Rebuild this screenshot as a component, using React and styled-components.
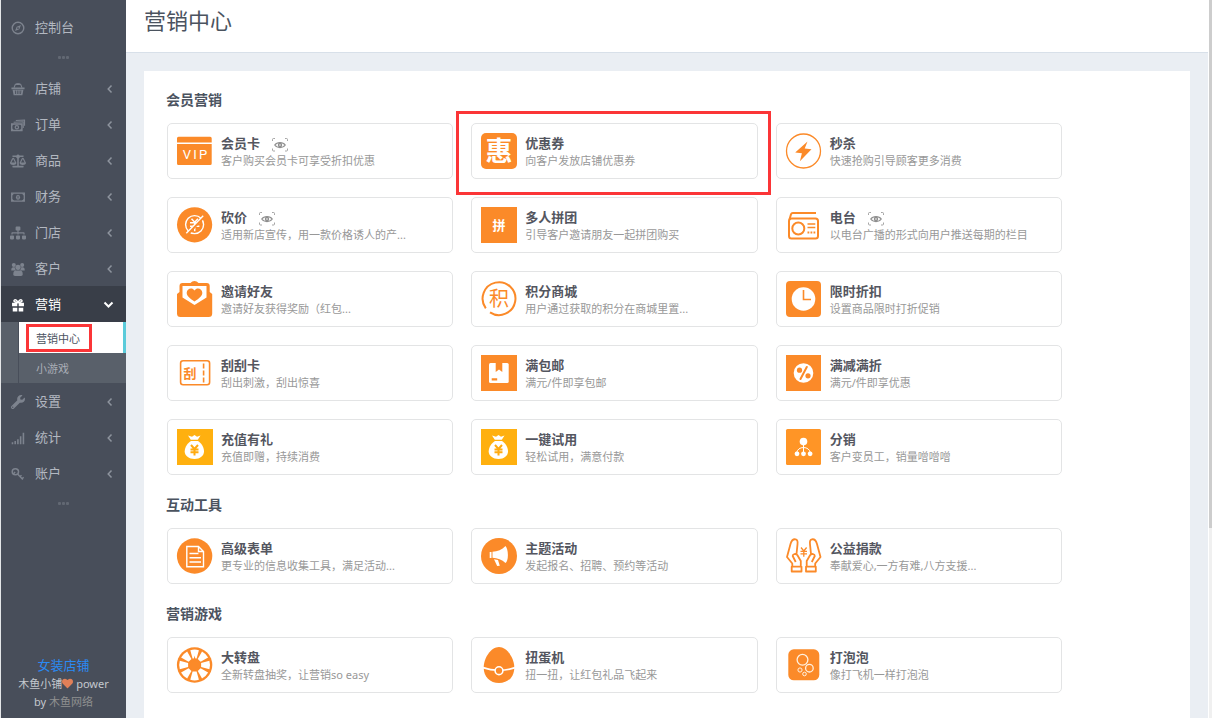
import { useState } from 'react';
import styled, { createGlobalStyle, css } from 'styled-components';
import { FaSitemap, FaWrench, FaBalanceScale, FaHeart } from 'react-icons/fa';

const GlobalStyle = createGlobalStyle`
  :root {
    --orange: #fb8a29;
    --sidebar: #484e5a;
    --mark: #fb3537;
  }

  * {
    box-sizing: border-box;
  }

  body {
    margin: 0;
    background-color: #eaeef3;
    font-family: "Noto Sans", "Noto Sans CJK SC", sans-serif;
    font-size: 13px;
    color: #4b535f;
  }

  a {
    color: inherit;
    text-decoration: none;
  }
`;

const Shell = styled.div`
  display: flex;
  height: 100vh;
  border-left: 1px solid #e4e6e8;
  overflow: hidden;
`;

const Sidebar = styled.aside`
  flex: 0 0 125px;
  display: flex;
  flex-direction: column;
  padding: 9px 0 7px;
  background-color: var(--sidebar);
  color: #b3b8c1;
`;

const Dots = styled.div`
  display: flex;
  align-items: center;
  justify-content: center;
  gap: 1px;
  height: 25px;

  i {
    width: 3px;
    height: 3px;
    border-radius: 1px;
    background-color: #626873;
  }
`;

const NavButton = styled.button`
  display: flex;
  align-items: center;
  width: 100%;
  height: 36px;
  padding: 2px 12px 0 9px;
  border: none;
  background-color: ${({ $open }) => ($open ? '#393e48' : 'transparent')};
  color: ${({ $open }) => ($open ? '#fff' : 'inherit')};
  font: inherit;
  text-align: left;
  cursor: pointer;

  > svg:first-child {
    flex: none;
    width: 16px;
    height: 14px;
    margin-right: 9px;
    color: ${({ $open }) => ($open ? '#fff' : '#7d838e')};
  }

  span {
    flex: 1;
    padding-bottom: 4px;
  }
`;

const SubMenu = styled.div`
  padding-left: 17px;
  background-color: #59606a;
`;

const SubItem = styled.a`
  display: flex;
  align-items: center;
  height: 30px;
  padding-left: 7px;
  border-left: 1px solid var(--sidebar);
  font-size: 11px;
  color: #a9aeb7;

  ${({ $current }) => $current && css`
    height: 31px;
    background-color: #fff;
    border-right: 3px solid #5bcbda;
    color: #4b535f;
  `}
`;

const SubLabel = styled.span`
  padding: 3px 9px 3px 7px;
  border: 3px solid ${({ $marked }) => ($marked ? 'var(--mark)' : 'transparent')};
`;

const SidebarFoot = styled.div`
  margin-top: auto;
  text-align: center;
  font-size: 11px;
  line-height: 18px;
  color: #c4c8ce;

  svg {
    width: 11px;
    height: 11px;
    color: #e07f58;
    vertical-align: -1px;
  }
`;

const StoreLink = styled.a`
  display: block;
  font-size: 13px;
  line-height: 20px;
  color: #2a8af4;
`;

const BrandLink = styled.a`
  color: #8f9090;
`;

const Main = styled.main`
  flex: 1;
  min-width: 0;
  overflow-y: auto;
  scrollbar-width: none;
`;

const Header = styled.header`
  padding: 0 18px 12px;
  background-color: #fff;
  border-bottom: 1px solid #d8e0e9;
`;

const PageTitle = styled.h1`
  margin: 0;
  font-size: 22px;
  font-weight: 400;
  line-height: 40px;
`;

const Panel = styled.div`
  display: flex;
  flex-direction: column;
  gap: 20px;
  margin: 18px;
  padding: 19px 22px 60px;
  background-color: #fff;
`;

const SectionTitle = styled.h2`
  margin: 0 0 13px;
  font-size: 14px;
  line-height: 20px;
`;

const CardGrid = styled.div`
  display: grid;
  grid-template-columns: repeat(3, minmax(0, 1fr));
  gap: 18px;
  max-width: 896px;
  padding-left: 1px;
`;

const Card = styled.a`
  position: relative;
  display: flex;
  align-items: center;
  gap: 8px;
  padding: 9px;
  border: 1px solid #e3e4e5;
  border-radius: 5px;

  ${({ $marked }) => $marked && css`
    &::after {
      content: '';
      position: absolute;
      inset: -13px -14px -17px -16px;
      border: 3px solid var(--mark);
    }
  `}

  > svg {
    flex: none;
    width: 36px;
    height: 36px;
    overflow: visible;
    color: var(--orange);
  }
`;

const CardText = styled.div`
  min-width: 0;
  padding-top: 2px;
`;

const CardName = styled.h3`
  display: flex;
  align-items: center;
  gap: 12px;
  margin: 0;
  font-size: 13px;
  line-height: 17px;
  color: #54565f;
`;

const CardDesc = styled.p`
  margin: 0;
  font-size: 11px;
  line-height: 17px;
  color: #989898;
  white-space: nowrap;
`;

const ScrollTrack = styled.div`
  flex: 0 0 4px;
  border-left: 1px solid #fff;
  background-color: #f0f0f0;
`;

const ScrollThumb = styled.div`
  height: 73.5%;
  background-color: #cdcdcd;
`;

/* sidebar icons */

const Glyph = ({ children }) => (
  <svg viewBox="0 0 16 16" fill="none" stroke="currentColor" aria-hidden="true">{children}</svg>
);

const CompassIcon = () => (
  <Glyph>
    <circle cx="8" cy="8" r="6.6" strokeWidth="1.6" />
    <path d="M11.4 4.6 9.5 9.4l-4.900 2 1.900-4.900z" fill="currentColor" stroke="none" />
    <circle cx="8" cy="8" r="1" fill="#484e5a" stroke="none" />
  </Glyph>
);

const BasketIcon = () => (
  <Glyph>
    <path d="M3.4 6.500 5 2.500h6l1.600 4" strokeWidth="1.2" />
    <path d="M6 1.500h4v1.800H6zM.5 6.200h15v2H.5z" fill="currentColor" stroke="none" />
    <path d="M1.800 8.900h12.400L13 15H3zM4.400 9.800l.4 4h.9l-.3-4zM6.700 9.800v4h.9v-4zM8.700 9.800v4h.9v-4zM10.800 9.800l-.3 4h.9l.4-4z" fill="currentColor" fillRule="evenodd" stroke="none" />
  </Glyph>
);

const CashIcon = () => (
  <Glyph>
    <path d="M.8 6.800h11.700v7.400H.8z" strokeWidth="1.600" />
    <path d="M1 7h2.400L1 9.200zM12.300 7H9.900l2.400 2.200zM1 14h2.400L1 11.800zM12.300 14H9.900l2.400-2.200z" fill="currentColor" stroke="none" />
    <circle cx="6.700" cy="10.500" r="1.900" strokeWidth="1.400" />
    <path d="M3 4.900 14 4.300v7M5.500 2.900l10-.6v6.500" strokeWidth="1.200" />
  </Glyph>
);

const BillIcon = () => (
  <Glyph>
    <path d="M.8 3.500h14.400v9.300H.8z" strokeWidth="1.500" />
    <path d="M1 4h2.800L1 6.600zM15 4h-2.800L15 6.600zM1 12.500h2.800L1 9.900zM15 12.500h-2.800L15 9.900z" fill="currentColor" stroke="none" />
    <ellipse cx="8" cy="8.200" rx="2.300" ry="2.900" fill="currentColor" stroke="none" />
    <path d="M8 6.700v3" stroke="#484e5a" />
  </Glyph>
);

const CrowdIcon = () => (
  <Glyph>
    <g fill="currentColor" stroke="none">
      <circle cx="3.200" cy="3.300" r="2.300" />
      <circle cx="12.800" cy="3.300" r="2.300" />
      <circle cx="8" cy="6" r="3" />
      <path d="M.3 9.200C.3 7 1.200 6 2.600 6h1.700c.2 1.600.6 2.700 1.700 3.600H.3zM15.700 9.200C15.700 7 14.800 6 13.400 6h-1.700c-.2 1.600-.6 2.700-1.700 3.600h5.700z" />
      <path d="M2.600 14c0-2.800.9-4.200 2.900-4.200h5c2 0 2.900 1.400 2.900 4.200 0 1.200-.8 2-2 2H4.600c-1.200 0-2-.8-2-2z" />
    </g>
  </Glyph>
);

const GiftIcon = () => (
  <Glyph>
    <path d="M1.200 5.500h6v4h-6zM8.800 5.500h6v4h-6zM2 11.200h5.200v4.300H2zM8.800 11.200H14v4.300H8.800z" fill="currentColor" stroke="none" />
    <path d="M8 5.400C7 2.600 5 1.400 3.700 2.500 2.700 3.500 4 5 8 5.400zM8 5.400c1-2.800 3-4 4.300-2.900 1 1-.3 2.500-4.300 2.900z" strokeWidth="1.600" />
  </Glyph>
);

const SignalIcon = () => (
  <Glyph>
    <path d="M1.700 12.800v2.200M4.800 11.500V15M7.900 9.300V15M11 6v9M14.200 2v13" strokeWidth="1.800" />
  </Glyph>
);

const KeyIcon = () => (
  <Glyph>
    <ellipse cx="5" cy="5.500" rx="3.600" ry="3.400" strokeWidth="1.700" />
    <path d="m7.500 8 6 6.300M9.800 11.500l2.200-2.200M12.200 14l2.200-2.200M2.500 8.500l2.200-3" strokeWidth="1.600" />
  </Glyph>
);

const Caret = ({ open }) => (
  <svg width="12" height="12" viewBox="0 0 12 12" fill="none" stroke="currentColor" aria-hidden="true">
    {open
      ? <path d="m2.500 3.500 4 4 4-4" strokeWidth="2" />
      : <path d="M9.500 2.500 6.200 6l3.300 3.500" stroke="#8d939d" strokeWidth="1.500" />}
  </svg>
);

/* card icons, all on a 36 unit square */

const Art = ({ children }) => <svg viewBox="0 0 36 36" fill="currentColor" aria-hidden="true">{children}</svg>;

const iconFont = '"Noto Sans CJK SC", sans-serif';

const VipIcon = () => (
  <Art>
    <path d="M1.500 3.700h31.700a1.500 1.500 0 0 1 1.500 1.500v4.300H0V5.200a1.500 1.500 0 0 1 1.500-1.500zM0 11h34.700v19.500a1.500 1.500 0 0 1-1.500 1.500H1.500A1.500 1.500 0 0 1 0 30.500z" />
    <g fill="#fff" fontFamily="Roboto, sans-serif" fontSize="13" textAnchor="middle">
      <text x="10" y="26">V</text>
      <text x="18" y="26">I</text>
      <text x="26" y="26">P</text>
    </g>
  </Art>
);

const CouponIcon = () => (
  <Art>
    <rect width="36" height="36" rx="5" />
    <text x="18" y="28" fill="#fff" fontFamily={iconFont} fontWeight="700" fontSize="27" textAnchor="middle">惠</text>
  </Art>
);

const FlashIcon = () => (
  <Art>
    <circle cx="17.5" cy="18" r="17" fill="none" stroke="currentColor" strokeWidth="1.3" />
    <path d="M21.500 8.500 9.200 19.500l6.700.8-2 8L25.500 16.300l-6.800-.9z" />
  </Art>
);

const BargainIcon = () => (
  <Art>
    <circle cx="17.600" cy="17.800" r="17.600" />
    <g fill="none" stroke="#fff" strokeWidth="1.400">
      <circle cx="17.600" cy="17.600" r="9" />
      <path d="m14.500 11.800 3.200 3.400 3.200-3.400M13 15.800h9.400M13 19.300h9.400M17.700 15.200v9" strokeWidth="1.500" />
      <path d="M27 9.500 10.500 27" stroke="#fb8a29" strokeWidth="3" />
      <path d="M26.200 8.700 9.300 26.300" />
    </g>
  </Art>
);

const GroupBuyIcon = () => (
  <Art>
    <rect width="36" height="36" />
    <text x="18" y="23" fill="#fff" fontFamily={iconFont} fontWeight="700" fontSize="13" textAnchor="middle">拼</text>
  </Art>
);

const RadioIcon = () => (
  <Art>
    <g fill="none" stroke="currentColor" strokeWidth="2">
      <rect x="3" y="11.500" width="29" height="20" rx="2.500" />
      <path d="M3.500 12.500 5 7.300Q5.400 6 6.800 6H30" />
      <circle cx="12.300" cy="21.500" r="6" />
      <path d="M21.500 17h7.800M21.500 20.500h7.800" strokeWidth="1.700" />
      <path d="M21.500 25.500h7.800" strokeDasharray="1.800 1.200" />
    </g>
  </Art>
);

const InviteIcon = () => (
  <Art>
    <path d="M13.500 2C14.500.7 16 0 17.500 0s3 .7 4 2h8.200a3 3 0 0 1 3 3v6l2.500 2v19.500a3.500 3.500 0 0 1-3.500 3.500H3.500A3.500 3.500 0 0 1 0 32.500V13l2.500-2V5a3 3 0 0 1 3-3z" />
    <path d="M5.500 5h24v11.500l-12 7.500-12-7.500z" fill="#fff" />
    <path d="M17.500 20.500c-5-3.300-7.800-5.500-7.800-8.700 0-4.400 5.600-6 7.800-2.300 2.200-3.700 7.800-2.100 7.800 2.300 0 3.200-2.800 5.400-7.800 8.700z" />
  </Art>
);

const PointsIcon = () => (
  <Art>
    <path d="M4.800 27.300A16.400 16.400 0 1 1 9 31.300" fill="none" stroke="currentColor" strokeWidth="2" />
    <text x="18" y="25" fontFamily={iconFont} fontSize="20" textAnchor="middle">积</text>
  </Art>
);

const ClockIcon = () => (
  <Art>
    <rect width="35" height="36" rx="4" />
    <circle cx="17.500" cy="18" r="11.800" fill="#fff" />
    <path d="M17.500 9v9.500H25" fill="none" stroke="currentColor" strokeWidth="1.600" />
  </Art>
);

const ScratchIcon = () => (
  <Art>
    <rect x="3.600" y="5.800" width="29" height="24" rx="2.500" fill="none" stroke="currentColor" strokeWidth="1.600" />
    <path d="M26.600 8.500v19" fill="none" stroke="currentColor" strokeWidth="1.600" strokeDasharray="5 2" />
    <text x="13" y="22.500" fontFamily={iconFont} fontWeight="700" fontSize="13" textAnchor="middle">刮</text>
  </Art>
);

const ParcelIcon = () => (
  <Art>
    <rect width="36" height="36" />
    <rect x="8" y="8" width="19.700" height="20" rx="1.500" fill="#fff" />
    <path d="M14.700 8h6.600v9L18 14.500 14.700 17zM10.700 23.300h5.500v2.200h-5.500z" />
  </Art>
);

const PercentIcon = () => (
  <Art>
    <rect width="35" height="36" />
    <circle cx="17.500" cy="18" r="9.800" fill="#fff" />
    <circle cx="13.500" cy="15.200" r="2.600" />
    <circle cx="22" cy="20.800" r="2.600" />
    <path d="m20.800 12-6.300 12" stroke="currentColor" strokeWidth="2" strokeLinecap="round" />
  </Art>
);

const MoneyBagIcon = () => (
  <Art>
    <rect width="36" height="36" fill="#ffb00f" />
    <path d="m11 6.500 4 1.200 2.500-1.700L20 7.700l3.500-1.200-2.700 4.200h-7z" fill="#fff" />
    <path d="M14 12h7c2.800 1.700 6 5.800 6 10.300 0 4.700-4 7.700-9.500 7.700S7.700 27 7.700 22.300C7.700 17.800 11.200 13.700 14 12z" fill="#fff" />
    <path d="m14 16 3.500 4L21 16M13.500 20.500h8M13.500 23.300h8M17.500 20v6.500" fill="none" stroke="#ffab10" strokeWidth="2" />
  </Art>
);

const ResellIcon = () => (
  <Art>
    <rect width="35" height="36" rx="1.500" fill="#ff9526" />
    <g fill="#fff">
      <circle cx="17.500" cy="12.600" r="3.800" />
      <circle cx="11" cy="24.800" r="2.400" />
      <circle cx="17.500" cy="24.800" r="2.400" />
      <circle cx="24.100" cy="24.800" r="2.400" />
      <path d="M17.500 15v8M10.700 23.500c.6-3 3.300-5 6.800-5s6.200 2 6.800 5" fill="none" stroke="#fff" strokeWidth="1" />
    </g>
  </Art>
);

const FormIcon = () => (
  <Art>
    <circle cx="17.600" cy="18" r="17.700" />
    <path d="M9.800 8.500h11.700l5 5v15.200H9.800zM21.500 8.500v5h5M12.500 15.500h9M12.500 19.700h11.500M12.500 24h11.500" fill="none" stroke="#fff" strokeWidth="1.400" />
  </Art>
);

const MegaphoneIcon = () => (
  <Art>
    <circle cx="18" cy="18" r="18" />
    <path d="M8.700 14h1.800v6H8.700zM11.500 13.700c5-.2 9.500-2 13-5.700 1.400 1.500 2.400 4.800 2.400 9s-1 7-2.400 8c-3.500-3.400-8-5-13-5.200z" fill="#fff" />
    <path d="m13 21.200 4 .8 1.800 5.700-2.600.4z" fill="#fff" />
  </Art>
);

const hand = 'M6.300 28.500v-3L1 19 4.500 6C5.500 2.500 7.500 1 9.500 1.300c2.200.3 2.300 2.700 2 5L10.500 16M14.800 28.500V23l-3.500-6c-1.500-1.700-4.600-1-4.600 1l3 6M5.700 28.700h9.800v4.800H5.700z';

const DonateIcon = () => (
  <Art>
    <g fill="none" stroke="currentColor" strokeWidth="1.800" strokeLinejoin="round">
      <path d={hand} />
      <path d={hand} transform="matrix(-1 0 0 1 35.500 0)" />
      <path d="m15 9.500 2.800 3.500 2.800-3.500M14.500 13.300H21M14.500 15.800H21M17.800 13v5.800" strokeWidth="1.300" />
    </g>
  </Art>
);

const WheelIcon = () => (
  <Art>
    <circle cx="17.600" cy="18" r="17.700" />
    {[0, 45, 90, 135, 180, 225, 270, 315].map((angle) => (
      <path key={angle} d="m15.600 11.500-2.300-8.300a15.500 15.500 0 0 1 8.600 0l-2.300 8.300z" fill="#fff" transform={`rotate(${angle} 17.600 18)`} />
    ))}
    <circle cx="17.600" cy="18" r="5.300" />
    <path d="m17.600 8.500 1.400 6h-2.800z" />
  </Art>
);

const EggIcon = () => (
  <Art>
    <path d="M18 0c8 0 15.300 11 15.300 20.500C33.300 30 27 36 18 36S2.700 30 2.700 20.500C2.700 11 10 0 18 0z" />
    <path d="M2 20.700c5 1.800 10.500 2.600 16 2.600s11-.8 16-2.600" fill="none" stroke="#fff" strokeWidth="1.800" />
    <circle cx="18" cy="23.700" r="3.900" stroke="#fff" strokeWidth="1.600" />
  </Art>
);

const BubbleIcon = () => (
  <Art>
    <rect x="2.300" y="2.300" width="31" height="31" rx="5.500" />
    <g fill="none" stroke="#fff0df" strokeWidth="1.300">
      <circle cx="16.500" cy="12.800" r="5.400" />
      <circle cx="23.400" cy="21.200" r="3.800" />
      <circle cx="14" cy="23" r="2.100" strokeWidth="1" />
      <circle cx="18.500" cy="27" r="1.800" strokeWidth="1" />
    </g>
  </Art>
);

const PreviewIcon = () => (
  <svg width="16" height="16" viewBox="0 0 16 16" fill="none" stroke="#8f8f8f" aria-hidden="true">
    <path d="M.5 5V3.500q0-1 1-1H3M13 2.500h1.500q1 0 1 1V5M15.500 12.500V14q0 1-1 1H13M3 15H1.500q-1 0-1-1v-1.500" strokeWidth="0.800" />
    <path d="M2.800 9C5 5.700 11 5.700 13.200 9 11 12.300 5 12.300 2.800 9z" strokeWidth="1.300" />
    <circle cx="8" cy="9" r="1.500" strokeWidth="1.400" />
  </svg>
);

const topMenu = [
  { label: '店铺', icon: BasketIcon },
  { label: '订单', icon: CashIcon },
  { label: '商品', icon: FaBalanceScale },
  { label: '财务', icon: BillIcon },
  { label: '门店', icon: FaSitemap },
  { label: '客户', icon: CrowdIcon },
  { label: '营销', icon: GiftIcon, children: ['营销中心', '小游戏'] },
  { label: '设置', icon: FaWrench },
  { label: '统计', icon: SignalIcon },
  { label: '账户', icon: KeyIcon },
];

const sections = [
  {
    title: '会员营销',
    cards: [
      { name: '会员卡', desc: '客户购买会员卡可享受折扣优惠', icon: VipIcon, preview: true },
      { name: '优惠券', desc: '向客户发放店铺优惠券', icon: CouponIcon, marked: true },
      { name: '秒杀', desc: '快速抢购引导顾客更多消费', icon: FlashIcon },
      { name: '砍价', desc: '适用新店宣传，用一款价格诱人的产...', icon: BargainIcon, preview: true },
      { name: '多人拼团', desc: '引导客户邀请朋友一起拼团购买', icon: GroupBuyIcon },
      { name: '电台', desc: '以电台广播的形式向用户推送每期的栏目', icon: RadioIcon, preview: true },
      { name: '邀请好友', desc: '邀请好友获得奖励（红包...', icon: InviteIcon },
      { name: '积分商城', desc: '用户通过获取的积分在商城里置...', icon: PointsIcon },
      { name: '限时折扣', desc: '设置商品限时打折促销', icon: ClockIcon },
      { name: '刮刮卡', desc: '刮出刺激，刮出惊喜', icon: ScratchIcon },
      { name: '满包邮', desc: '满元/件即享包邮', icon: ParcelIcon },
      { name: '满减满折', desc: '满元/件即享优惠', icon: PercentIcon },
      { name: '充值有礼', desc: '充值即赠，持续消费', icon: MoneyBagIcon },
      { name: '一键试用', desc: '轻松试用，满意付款', icon: MoneyBagIcon },
      { name: '分销', desc: '客户变员工，销量噌噌噌', icon: ResellIcon },
    ],
  },
  {
    title: '互动工具',
    cards: [
      { name: '高级表单', desc: '更专业的信息收集工具，满足活动...', icon: FormIcon },
      { name: '主题活动', desc: '发起报名、招聘、预约等活动', icon: MegaphoneIcon },
      { name: '公益捐款', desc: '奉献爱心,一方有难,八方支援...', icon: DonateIcon },
    ],
  },
  {
    title: '营销游戏',
    cards: [
      { name: '大转盘', desc: '全新转盘抽奖，让营销so easy', icon: WheelIcon },
      { name: '扭蛋机', desc: '扭一扭，让红包礼品飞起来', icon: EggIcon },
      { name: '打泡泡', desc: '像打飞机一样打泡泡', icon: BubbleIcon },
    ],
  },
];

function NavDots() {
  return <Dots><i /><i /><i /></Dots>;
}

function App() {
  const [openMenu, setOpenMenu] = useState('营销');

  return (
    <>
      <GlobalStyle />
      <Shell>
        <Sidebar>
          <nav>
            <NavButton type="button"><CompassIcon /><span>控制台</span></NavButton>
            <NavDots />
            {topMenu.map(({ label, icon: Icon, children }) => {
              const open = label === openMenu;
              return (
                <div key={label}>
                  <NavButton type="button" $open={open} onClick={() => setOpenMenu(label)}>
                    <Icon />
                    <span>{label}</span>
                    <Caret open={open} />
                  </NavButton>
                  {open && children && (
                    <SubMenu>
                      {children.map((child, index) => (
                        <SubItem href="#" key={child} $current={index === 0}>
                          <SubLabel $marked={index === 0}>{child}</SubLabel>
                        </SubItem>
                      ))}
                    </SubMenu>
                  )}
                </div>
              );
            })}
            <NavDots />
          </nav>
          <SidebarFoot>
            <StoreLink href="#">女装店铺</StoreLink>
            <div>木鱼小铺<FaHeart /> power</div>
            <div>by <BrandLink href="#">木鱼网络</BrandLink></div>
          </SidebarFoot>
        </Sidebar>
        <Main>
          <Header>
            <PageTitle>营销中心</PageTitle>
          </Header>
          <Panel>
            {sections.map((section) => (
              <section key={section.title}>
                <SectionTitle>{section.title}</SectionTitle>
                <CardGrid>
                  {section.cards.map(({ name, desc, icon: Icon, preview, marked }) => (
                    <Card href="#" key={name} $marked={marked}>
                      <Icon />
                      <CardText>
                        <CardName>{name}{preview && <PreviewIcon />}</CardName>
                        <CardDesc>{desc}</CardDesc>
                      </CardText>
                    </Card>
                  ))}
                </CardGrid>
              </section>
            ))}
          </Panel>
        </Main>
        <ScrollTrack><ScrollThumb /></ScrollTrack>
      </Shell>
    </>
  );
}

export default App;
